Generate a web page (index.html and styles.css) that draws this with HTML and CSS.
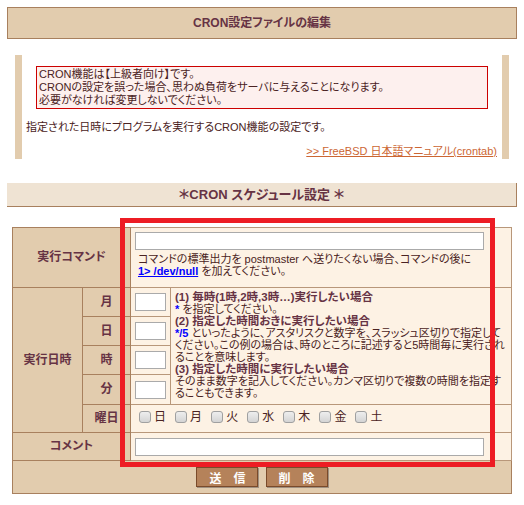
FILE: index.html
```html
<!DOCTYPE html>
<html>
  <head>
    <meta http-equiv="content-type" content="text/html; charset=utf-8" />
    <link rel="stylesheet" href="styles.css">
  </head>
  <body>
    <div class="page-title">CRON設定ファイルの編集</div>

    <div class="info">
      <div class="warning">
        CRON機能は【上級者向け】です。<br/>
        CRONの設定を誤った場合、思わぬ負荷をサーバに与えることになります。<br/>
        必要がなければ変更しないでください。
      </div>
      <p class="lead">指定された日時にプログラムを実行するCRON機能の設定です。</p>
      <p class="manual"><a href="#">&gt;&gt; FreeBSD 日本語マニュアル(crontab)</a></p>
    </div>

    <div class="section-title">＊CRON スケジュール設定 ＊</div>

    <form class="cronForm">
      <table class="cron">
        <colgroup>
          <col class="c1"><col class="c2"><col class="c3"><col class="c4">
        </colgroup>
        <tr class="row-cmd">
          <th colspan="2">実行コマンド</th>
          <td colspan="2" class="cmd">
            <input type="text" class="txt-long">
            <div class="note">コマンドの標準出力を postmaster へ送りたくない場合、コマンドの後に<br/>
              <a class="code" href="#">1&gt; /dev/null</a> を加えてください。</div>
          </td>
        </tr>
        <tr class="row-time">
          <th rowspan="5">実行日時</th>
          <th>月</th>
          <td class="num"><input type="text" class="txt-num"></td>
          <td rowspan="4" class="help">
            <b>(1) 毎時(1時,2時,3時…)実行したい場合</b><br/>
            <b class="blue">*</b> を指定してください。<br/>
            <b>(2) 指定した時間おきに実行したい場合</b><br/>
            <b class="blue">*/5</b> といったように、アスタリスクと数字を、スラッシュ区切りで指定してください。この例の場合は、時のところに記述すると5時間毎に実行されることを意味します。<br/>
            <b>(3) 指定した時間に実行したい場合</b><br/>
            そのまま数字を記入してください。カンマ区切りで複数の時間を指定することもできます。
          </td>
        </tr>
        <tr class="row-time">
          <th>日</th>
          <td class="num"><input type="text" class="txt-num"></td>
        </tr>
        <tr class="row-time">
          <th>時</th>
          <td class="num"><input type="text" class="txt-num"></td>
        </tr>
        <tr class="row-time last">
          <th>分</th>
          <td class="num"><input type="text" class="txt-num"></td>
        </tr>
        <tr class="row-week">
          <th>曜日</th>
          <td colspan="2" class="week">
            <label><input type="checkbox">日</label>
            <label><input type="checkbox">月</label>
            <label><input type="checkbox">火</label>
            <label><input type="checkbox">水</label>
            <label><input type="checkbox">木</label>
            <label><input type="checkbox">金</label>
            <label><input type="checkbox">土</label>
          </td>
        </tr>
        <tr class="row-comment">
          <th colspan="2">コメント</th>
          <td colspan="2" class="cmd"><input type="text" class="txt-long"></td>
        </tr>
        <tr class="row-btn">
          <td colspan="4" class="buttons">
            <input type="submit" class="btn" value="送　信">
            <input type="reset" class="btn" value="削　除">
          </td>
        </tr>
      </table>
    </form>

    <div class="mark"></div>
  </body>
</html>
```

FILE: styles.css
```css
body {
  margin: 7px;
  padding: 0;
  background: #fff;
  color: #4a2222;
  font-family: "Liberation Sans", "Noto Sans CJK JP", sans-serif;
  font-size: 11px;
  line-height: 13px;
  font-feature-settings: "palt";
  position: relative;
}
.page-title {
  background: #e2ccae;
  border: 1px solid #a8805e;
  height: 30px;
  line-height: 30px;
  text-align: center;
  font-size: 12px;
  font-weight: bold;
  color: #663344;
}
.info {
  margin: 16px 8px 0 8px;
  border-left: 7px solid #e2ccae;
  border-right: 7px solid #e2ccae;
  padding: 11px 5px 1px 4px;
}
.warning {
  margin: 0 9px 0 10px;
  border: 1px solid #cc0000;
  background: #fdf0ee;
  padding: 1px 2px;
}
.lead {
  margin: 12px 0 0 0;
}
.manual {
  margin: 11px 0 0 0;
  text-align: right;
}
.manual a {
  color: #cc6633;
}
.section-title {
  margin-top: 24px;
  background: #efe3d3;
  border-right: 1px solid #a8805e;
  border-bottom: 1px solid #a8805e;
  height: 23px;
  line-height: 23px;
  text-align: center;
  font-size: 13px;
  font-weight: bold;
  color: #663344;
}
form {
  margin: 20px 6px 0 5px;
}
.cron {
  width: 500px;
  table-layout: fixed;
  border-collapse: collapse;
  border: 1px solid #a8805e;
  background: #e2ccae;
  font-size: 11px;
}
.c1 { width: 70px; }
.c2 { width: 48px; }
.c3 { width: 40px; }
.cron th {
  border: 1px solid #a8805e;
  background: #e2ccae;
  color: #663344;
  font-size: 12px;
  font-weight: bold;
  padding: 0;
}
.cron td {
  border: 1px solid #b8977a;
  background: #fdf2e4;
  padding: 0;
}
.row-cmd { height: 60px; }
.row-time { height: 29px; }
.row-time.last { height: 30px; }
.row-week { height: 28px; }
.row-comment { height: 28px; }
.row-btn { height: 33px; }
.cmd {
  padding: 4px !important;
  vertical-align: top;
}
.row-comment .cmd {
  vertical-align: middle;
}
.txt-long {
  appearance: none;
  -webkit-appearance: none;
  display: block;
  box-sizing: border-box;
  width: 349px;
  height: 18px;
  margin: 0;
  border: 1px solid #aaa;
  background: #fff;
}
.note {
  margin: 3px 0 0 3px;
  line-height: 12px;
}
.code {
  color: #0000ff;
  font-weight: bold;
}
.num {
  padding: 0 0 0 4px !important;
}
.txt-num {
  appearance: none;
  -webkit-appearance: none;
  display: block;
  box-sizing: border-box;
  width: 31px;
  height: 18px;
  margin: 0;
  border: 1px solid #aaa;
  background: #fff;
}
.help {
  vertical-align: top;
  padding: 3px 3px 0 4px !important;
  line-height: 12px;
}
.help b {
  color: #663344;
  font-size: 11.5px;
}
.help b.blue {
  color: #0000ff;
  font-size: 11px;
}
.week {
  padding: 0 0 0 8px !important;
}
.week label {
  display: inline-flex;
  align-items: center;
  margin-right: 6px;
  font-size: 12px;
}
.week input {
  appearance: none;
  -webkit-appearance: none;
  box-sizing: border-box;
  width: 12px;
  height: 12px;
  margin: 0 3px 0 0;
  border: 1px solid #a0a0a0;
  border-radius: 3px;
  background: linear-gradient(#eee, #d4d4d4);
}
.buttons {
  background: #e2ccae !important;
  border: 1px solid #a8805e !important;
  text-align: center;
  vertical-align: top;
  padding: 6px 0 0 0 !important;
}
.btn {
  appearance: none;
  -webkit-appearance: none;
  width: 62px;
  height: 20px;
  margin: 0 2px;
  padding: 0;
  border: 1px solid #7a4a2a;
  background: #b5825a;
  color: #fff;
  font-family: "Noto Sans CJK JP", sans-serif;
  font-size: 12px;
  font-weight: bold;
  box-shadow: 1px 1px 0 #a09080;
}
.mark {
  position: absolute;
  left: 113px;
  top: 211px;
  width: 365px;
  height: 239px;
  border: 5px solid #ed1c24;
  pointer-events: none;
}
```
